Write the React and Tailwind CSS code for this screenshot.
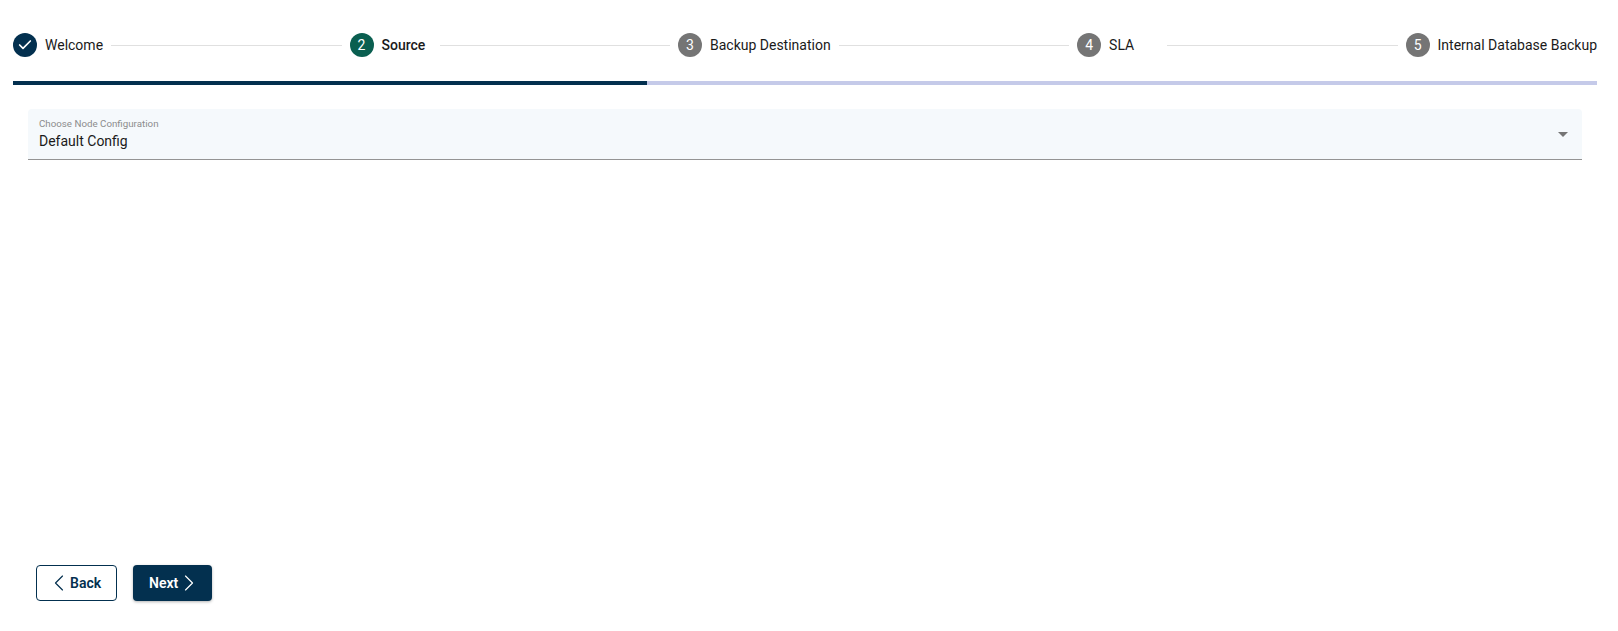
import React from 'react';
import { Check, ChevronLeft, ChevronRight } from 'lucide-react';

const steps = [
    { label: 'Welcome', done: true },
    { label: 'Source', active: true },
    { label: 'Backup Destination' },
    { label: 'SLA' },
    { label: 'Internal Database Backup' },
];

const Step = ({ step, index }) => {
    const circleColor = step.done ? 'bg-[#03304f]' : step.active ? 'bg-[#0a5f50]' : 'bg-[#757575]';

    return (
        <div className="flex items-center shrink-0">
            <div className={`flex h-6 w-6 items-center justify-center rounded-full text-sm text-white ${circleColor}`}>
                {step.done ? <Check className="h-4 w-4" strokeWidth={2.5} /> : index + 1}
            </div>
            <div className={`ml-2 min-w-[50px] text-sm text-[#1a1a1a] ${step.active ? 'font-medium' : ''}`}>
                {step.label}
            </div>
        </div>
    );
};

const App = () => {
    return (
        <div className="flex h-[631px] flex-col bg-white pl-[13px] pr-[21px] font-['Roboto',sans-serif]">
            {/* Stepper header */}
            <div className="flex h-6 items-center mt-[33px]">
                {steps.map((step, index) => (
                    <React.Fragment key={step.label}>
                        <Step step={step} index={index} />
                        {index < steps.length - 1 && <div className="mx-2 h-px flex-1 bg-[#e0e0e0]"></div>}
                    </React.Fragment>
                ))}
            </div>

            {/* Progress */}
            <div className="mt-6 h-1 w-full bg-[#c5cae9]">
                <div className="h-full w-2/5 bg-[#03304f]"></div>
            </div>

            {/* Node config select */}
            <div className="relative ml-[15px] mr-[15px] mt-6 h-[51px] rounded-t border-b border-[#949494] bg-[#f5f9fc] px-[11px] pt-[9px]">
                <div className="text-[9.75px] leading-3 text-[#8c8c8c]">Choose Node Configuration</div>
                <div className="mt-px text-sm leading-5 text-[#1a1a1a]">Default Config</div>
                <div className="absolute right-[14px] top-[23px] h-0 w-0 border-x-[5px] border-t-[5px] border-x-transparent border-t-[#757575]"></div>
            </div>

            {/* Footer buttons */}
            <div className="mt-auto mb-[30px] ml-[23px] flex gap-4">
                <button className="flex h-9 w-[81px] items-center rounded border border-[#03304f] bg-white pl-2 text-sm font-semibold text-[#03304f]">
                    <ChevronLeft className="-mr-[3px] h-7 w-7" strokeWidth={1} />
                    Back
                </button>
                <button className="flex h-9 w-[79px] items-center rounded bg-[#03304f] pl-4 text-sm font-semibold text-white shadow-[0_1px_3px_rgba(0,0,0,0.3)]">
                    Next
                    <ChevronRight className="-ml-[3px] h-7 w-7" strokeWidth={1} />
                </button>
            </div>
        </div>
    );
};

export default App;
